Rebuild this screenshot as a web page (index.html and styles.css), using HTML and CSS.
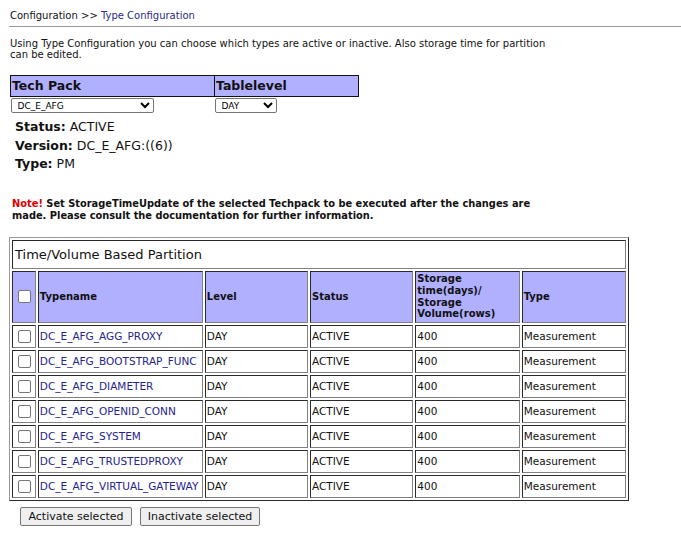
FILE: index.html
```html
<!DOCTYPE html>
<html>
<head>
<meta charset="utf-8">
<link rel="stylesheet" href="styles.css">
</head>
<body>
<div class="page">
  <div class="crumb">Configuration &gt;&gt; <a class="crumb-link" href="#">Type Configuration</a></div>
  <div class="rule"></div>
  <p class="desc">Using Type Configuration you can choose which types are active or inactive. Also storage time for partition<br>can be edited.</p>

  <table class="pick">
    <tr><th class="pick-h pick-h1">Tech Pack</th><th class="pick-h pick-h2">Tablelevel</th></tr>
    <tr>
      <td class="pick-c"><select class="sel sel-tp"><option>DC_E_AFG</option></select></td>
      <td class="pick-c"><select class="sel sel-lv"><option>DAY</option></select></td>
    </tr>
  </table>

  <div class="info">
    <div><b>Status:</b> ACTIVE</div>
    <div><b>Version:</b> DC_E_AFG:((6))</div>
    <div><b>Type:</b> PM</div>
  </div>

  <p class="note"><span class="note-red">Note!</span> Set StorageTimeUpdate of the selected Techpack to be executed after the changes are<br>made. Please consult the documentation for further information.</p>

  <table class="grid">
    <tr><td class="title" colspan="6">Time/Volume Based Partition</td></tr>
    <tr class="head">
      <th class="c-cb"><span class="cb"></span></th>
      <th class="c-name">Typename</th>
      <th class="c-col">Level</th>
      <th class="c-col">Status</th>
      <th class="c-col">Storage<br>time(days)/<br>Storage<br>Volume(rows)</th>
      <th class="c-col">Type</th>
    </tr>
    <tr><td class="c-cb"><span class="cb"></span></td><td><a class="tlink" href="#">DC_E_AFG_AGG_PROXY</a></td><td>DAY</td><td>ACTIVE</td><td>400</td><td>Measurement</td></tr>
    <tr><td class="c-cb"><span class="cb"></span></td><td><a class="tlink" href="#">DC_E_AFG_BOOTSTRAP_FUNC</a></td><td>DAY</td><td>ACTIVE</td><td>400</td><td>Measurement</td></tr>
    <tr><td class="c-cb"><span class="cb"></span></td><td><a class="tlink" href="#">DC_E_AFG_DIAMETER</a></td><td>DAY</td><td>ACTIVE</td><td>400</td><td>Measurement</td></tr>
    <tr><td class="c-cb"><span class="cb"></span></td><td><a class="tlink" href="#">DC_E_AFG_OPENID_CONN</a></td><td>DAY</td><td>ACTIVE</td><td>400</td><td>Measurement</td></tr>
    <tr><td class="c-cb"><span class="cb"></span></td><td><a class="tlink" href="#">DC_E_AFG_SYSTEM</a></td><td>DAY</td><td>ACTIVE</td><td>400</td><td>Measurement</td></tr>
    <tr><td class="c-cb"><span class="cb"></span></td><td><a class="tlink" href="#">DC_E_AFG_TRUSTEDPROXY</a></td><td>DAY</td><td>ACTIVE</td><td>400</td><td>Measurement</td></tr>
    <tr><td class="c-cb"><span class="cb"></span></td><td><a class="tlink" href="#">DC_E_AFG_VIRTUAL_GATEWAY</a></td><td>DAY</td><td>ACTIVE</td><td>400</td><td>Measurement</td></tr>
  </table>

  <div class="actions">
    <button class="btn btn-a">Activate selected</button>
    <button class="btn btn-b">Inactivate selected</button>
  </div>
</div>
</body>
</html>
```

FILE: styles.css
```css
html, body {
  margin: 0;
  padding: 0;
  background: #fff;
}
body {
  font-family: "DejaVu Sans", Verdana, sans-serif;
  color: #111;
}
.page {
  padding: 10px 0 0 9px;
}
.crumb {
  font-size: 10px;
  line-height: 12px;
  padding-left: 1px;
  color: #111;
}
.crumb-link {
  color: #2a2a8c;
  text-decoration: none;
}
.rule {
  height: 1px;
  background: #9a9a9a;
  margin-top: 4px;
}
.desc {
  font-size: 10px;
  line-height: 11px;
  margin: 11px 0 0 1px;
}
.pick {
  border-collapse: collapse;
  margin: 15px 0 0 1px;
}
.pick-h {
  background: #b0b0ff;
  border: 1px solid #111;
  font-size: 12.5px;
  font-weight: bold;
  text-align: left;
  height: 20px;
  padding: 0 1px;
  line-height: 16px;
}
.pick-h1 { width: 201px; }
.pick-h2 { width: 141px; }
.pick-c {
  padding: 1px 0 0 0;
  vertical-align: top;
  line-height: 0;
}
.sel {
  display: block;
  font-family: "DejaVu Sans", Verdana, sans-serif;
  font-size: 9px;
  height: 15px;
  padding: 0 2px;
  border: 1px solid #767676;
  border-radius: 2px;
  background: #fff;
  color: #000;
}
.sel-tp { width: 143px; }
.sel-lv { width: 62px; }
.info {
  font-size: 12.5px;
  line-height: 18.5px;
  margin: 5px 0 0 6px;
}
.note {
  font-size: 9.85px;
  font-weight: bold;
  line-height: 12px;
  margin: 24px 0 0 3px;
}
.note-red { color: #e00000; }
.grid {
  margin-top: 15px;
  border-collapse: separate;
  border-spacing: 2px;
  border: 1px solid;
  border-color: #9a9a9a #2a2a2a #2a2a2a #9a9a9a;
  width: 620px;
}
.grid td, .grid th {
  border: 1px solid;
  border-color: #2a2a2a #808080 #808080 #2a2a2a;
  padding: 0 1px;
  font-size: 10.5px;
  text-align: left;
  vertical-align: middle;
  white-space: nowrap;
}
.grid td { height: 21px; }
.grid .title {
  font-size: 13px;
  height: 27px;
  padding-left: 2px;
}
.head th {
  background: #b0b0ff;
  font-weight: bold;
  font-size: 10px;
  height: 50px;
  line-height: 11.7px;
}
.c-cb { width: 20px; text-align: center !important; }
.c-name { width: 161px; }
.c-col { width: 101px; }
.cb {
  display: inline-block;
  width: 11px;
  height: 11px;
  border: 1px solid #767676;
  border-radius: 2px;
  background: #fff;
  vertical-align: middle;
  margin-left: 1px;
}
.tlink {
  color: #24248c;
  text-decoration: none;
}
.actions {
  display: flex;
  gap: 8px;
  margin: 6px 0 0 11px;
}
.btn {
  font-family: "DejaVu Sans", Verdana, sans-serif;
  font-size: 11px;
  height: 19px;
  padding: 0 4px;
  border: 1px solid #767676;
  border-radius: 2px;
  background: #efefef;
  color: #111;
}
.btn-a { width: 112px; }
.btn-b { width: 120px; }
```
